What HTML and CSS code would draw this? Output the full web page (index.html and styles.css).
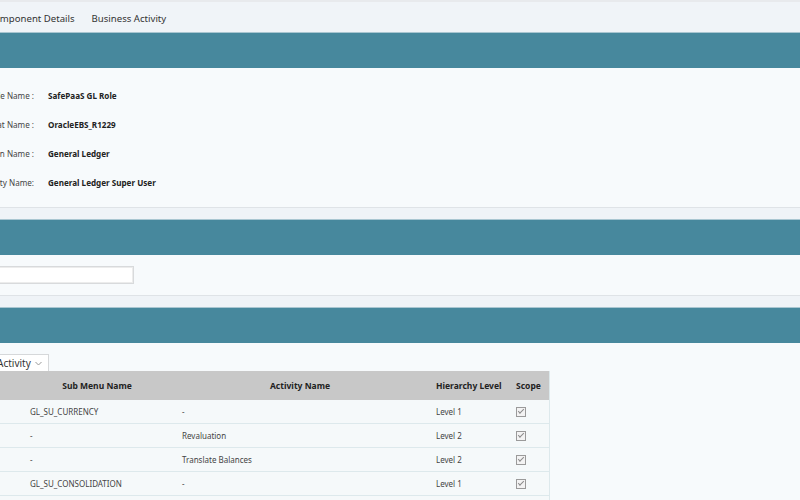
FILE: index.html
```html
<!DOCTYPE html>
<html>
<head>
    <title>Business Activity</title>
    <link rel="stylesheet" href="styles.css">
</head>
<body>
    <div class="page">
        <div class="tabs">
            <div class="tab">Component Details</div>
            <div class="tab">Business Activity</div>
        </div>

        <!-- Component details -->
        <div class="section">
            <div class="section-head"></div>
            <div class="section-body details">
                <div class="detail-row">
                    <div class="detail-label">Role Name :</div>
                    <div class="detail-value">SafePaaS GL Role</div>
                </div>
                <div class="detail-row">
                    <div class="detail-label">Datasource Format Name :</div>
                    <div class="detail-value">OracleEBS_R1229</div>
                </div>
                <div class="detail-row">
                    <div class="detail-label">Application Name :</div>
                    <div class="detail-value">General Ledger</div>
                </div>
                <div class="detail-row">
                    <div class="detail-label">Responsibility Name:</div>
                    <div class="detail-value">General Ledger Super User</div>
                </div>
            </div>
        </div>

        <!-- Search -->
        <div class="section">
            <div class="section-head"></div>
            <div class="section-body search">
                <input class="search-input" type="text">
            </div>
        </div>

        <!-- Business activity -->
        <div class="section">
            <div class="section-head"></div>
            <div class="section-body activity">
                <div class="select">
                    <span class="select-text">Business Activity</span>
                    <svg class="chevron" width="7" height="5" viewBox="0 0 7 5">
                        <path d="M0.5 1 L3.5 4 L6.5 1" fill="none" stroke="#999" stroke-width="1"/>
                    </svg>
                </div>
                <table class="activity-table">
                    <colgroup>
                        <col class="col-menu">
                        <col class="col-sub">
                        <col class="col-act">
                        <col class="col-level">
                        <col class="col-scope">
                    </colgroup>
                    <tr>
                        <th>Menu Name</th>
                        <th class="head-center">Sub Menu Name</th>
                        <th class="head-center">Activity Name</th>
                        <th class="head-left">Hierarchy Level</th>
                        <th class="head-left">Scope</th>
                    </tr>
                    <tr>
                        <td></td>
                        <td>GL_SU_CURRENCY</td>
                        <td>-</td>
                        <td>Level 1</td>
                        <td><span class="check"></span></td>
                    </tr>
                    <tr>
                        <td></td>
                        <td>-</td>
                        <td>Revaluation</td>
                        <td>Level 2</td>
                        <td><span class="check"></span></td>
                    </tr>
                    <tr>
                        <td></td>
                        <td>-</td>
                        <td>Translate Balances</td>
                        <td>Level 2</td>
                        <td><span class="check"></span></td>
                    </tr>
                    <tr>
                        <td></td>
                        <td>GL_SU_CONSOLIDATION</td>
                        <td>-</td>
                        <td>Level 1</td>
                        <td><span class="check"></span></td>
                    </tr>
                    <tr>
                        <td></td>
                        <td>-</td>
                        <td>Consolidation Workbench</td>
                        <td>Level 2</td>
                        <td><span class="check"></span></td>
                    </tr>
                </table>
            </div>
        </div>
    </div>
</body>
</html>
```

FILE: styles.css
```css
body {
    margin: 0;
    background-color: #eff3f7;
    font-family: 'Noto Sans', 'Open Sans', sans-serif;
    color: #333;
    overflow: hidden;
}

.page {
    margin-left: -100px;
    width: 900px;
}

/* Tabs */
.tabs {
    display: flex;
    height: 30px;
    align-items: center;
    gap: 17px;
    padding-left: 88px;
    border-top: 2px solid #e8eaed;
    background-color: #f0f4f8;
}

.tab {
    font-size: 9.6px;
    color: #333;
    padding-top: 2px;
}

/* Sections */
.section {
    margin-bottom: 11px;
}

.section-head {
    height: 35px;
    background-color: #47889d;
    border-top: 1px solid #a9c6d1;
}

.section-body {
    background-color: #f7fafc;
    border-bottom: 1px solid #dfe3e7;
    padding-left: 20px;
}

/* Details */
.details {
    padding-top: 13px;
    padding-bottom: 10px;
}

.detail-row {
    display: flex;
    align-items: center;
    height: 29px;
    gap: 14px;
    font-size: 8.1px;
}

.detail-label {
    width: 114px;
    text-align: right;
    color: #444;
}

.detail-value {
    font-weight: bold;
    color: #222;
}

/* Search */
.search {
    padding-top: 11px;
    padding-bottom: 11px;
}

.search-input {
    display: block;
    box-sizing: border-box;
    width: 214px;
    height: 18px;
    margin: 0;
    border: 1px solid #d8dadc;
    box-shadow: inset 0 0 0 1px #ececec;
    background: white;
}

/* Activity */
.activity {
    padding-top: 11px;
    padding-bottom: 20px;
}

.select {
    display: flex;
    align-items: center;
    box-sizing: border-box;
    width: 129px;
    height: 17px;
    padding: 0 5px 0 32px;
    border: 1px solid #d6d8da;
    border-bottom: none;
    background: white;
    font-size: 10px;
    color: #333;
}

.chevron {
    margin-left: auto;
    margin-right: 1px;
}

.activity-table {
    border-collapse: collapse;
    table-layout: fixed;
    width: 629px;
    font-size: 8px;
    color: #444;
    background-color: #f5f9fa;
}

.col-menu { width: 80px; }
.col-sub { width: 152px; }
.col-act { width: 254px; }
.col-level { width: 80px; }
.col-scope { width: 63px; }

.activity-table th {
    height: 29px;
    padding: 0;
    background-color: #c8c8c8;
    color: #222;
    font-weight: bold;
    font-size: 8.5px;
    white-space: nowrap;
}

.activity-table .head-center {
    text-align: center;
    padding-left: 42px;
}

.activity-table .head-left {
    text-align: left;
    padding-left: 30px;
}

.activity-table td {
    height: 23px;
    padding: 0 0 0 30px;
    border-bottom: 1px solid #dde9ec;
    white-space: nowrap;
    overflow: hidden;
}

.activity-table tr td:last-child,
.activity-table tr th:last-child {
    border-right: 1px solid #dde9ec;
}

.check {
    display: inline-block;
    position: relative;
    top: 1px;
    width: 8px;
    height: 8px;
    border: 1px solid #9a9a9a;
    background: #f3f3f3;
}

.check::after {
    content: "";
    position: absolute;
    left: 1px;
    top: 1px;
    width: 5px;
    height: 2px;
    border-left: 1px solid #8a8a8a;
    border-bottom: 1px solid #8a8a8a;
    transform: rotate(-45deg);
}
```
